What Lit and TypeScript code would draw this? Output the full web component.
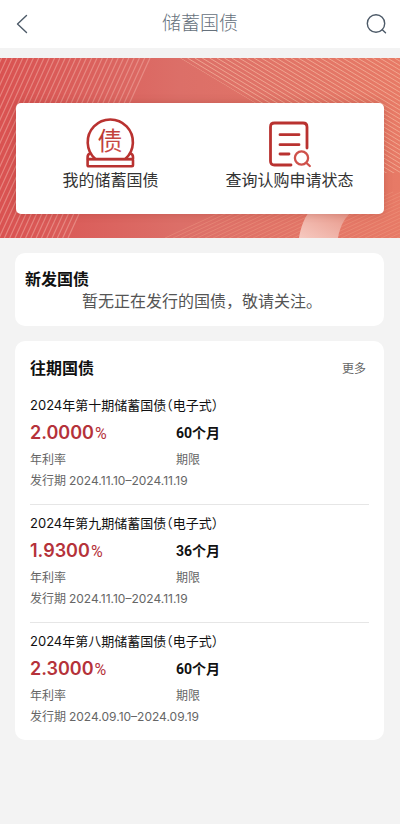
import { LitElement, html, css, svg } from "lit";
import { customElement } from "lit/decorators.js";

interface Bond {
  title: string;
  rate: string;
  term: string;
  period: string;
}

const BONDS: Bond[] = [
  { title: "2024年第十期储蓄国债（电子式）", rate: "2.0000", term: "60个月", period: "2024.11.10–2024.11.19" },
  { title: "2024年第九期储蓄国债（电子式）", rate: "1.9300", term: "36个月", period: "2024.11.10–2024.11.19" },
  { title: "2024年第八期储蓄国债（电子式）", rate: "2.3000", term: "60个月", period: "2024.09.10–2024.09.19" },
];

const backIcon = html`<svg width="24" height="24" viewBox="0 0 24 24" fill="none" stroke="#4d5a68" stroke-width="1.4" stroke-linecap="round" stroke-linejoin="round"><path d="M15.500 3.500 6.500 12l9 8.500"/></svg>`;

const searchIcon = html`<svg width="24" height="24" viewBox="0 0 24 24" fill="none" stroke="#4d5a68" stroke-width="1.4" stroke-linecap="round"><circle cx="11" cy="11.500" r="8.700"/><path d="m17.300 17.800 3.200 3"/></svg>`;

const bondIcon = html`<svg width="50" height="50" viewBox="0 0 50 50" fill="none" stroke="#b93230" stroke-width="2.6" stroke-linejoin="round">
  <defs><linearGradient id="ink" x1="0" y1="0" x2="1" y2="1"><stop offset="0" stop-color="#b22e2d"/><stop offset="1" stop-color="#d4574f"/></linearGradient></defs>
  <path d="M9.300 41A22.600 22.600 0 1 1 39.300 41"/>
  <path d="M4.500 35.500Q1.600 36 1.600 39V41H47V39Q47 36 44.100 35.500"/>
  <rect x="1.600" y="41.300" width="45.400" height="7" rx="1"/>
  <text class="seal" x="24" y="32" text-anchor="middle" fill="url(#ink)" stroke="none">债</text>
</svg>`;

const queryIcon = html`<svg width="50" height="50" viewBox="0 0 50 50" fill="none" stroke="#b93230" stroke-width="2.8" stroke-linecap="round">
  <path d="M26 47H9.500Q5.500 47 5.500 43V9Q5.500 5 9.500 5H38Q42 5 42 9V30"/>
  <path d="M15 16.700H34M15 26.700H34M15 36H24"/>
  <g stroke="#cf514b" stroke-width="2.3"><circle cx="36.500" cy="40" r="6.600"/><path d="m41.500 45 3.300 3"/></g>
</svg>`;

const leftLines = Array.from({ length: 44 }, (_, i) => {
  const x = 150 - i * 5.3;
  return svg`<path d="M${x} 0 ${x - 82} 180"/>`;
});

const rightLines = Array.from({ length: 56 }, (_, i) => {
  const x = 180 + (i - 24) * 7.4;
  return svg`<path d="M${x} 0l300 180"/>`;
});

const lowerLines = Array.from({ length: 40 }, (_, i) => {
  const x = 165 + i * 8;
  return svg`<path d="M${x} 180l100-46"/>`;
});

@customElement("app-root")
export class AppRoot extends LitElement {
  static styles = css`
    :host {
      display: block;
      min-height: 100vh;
      background: #f3f3f3;
      color: #111;
      font-family: Roboto, "Noto Sans CJK SC", sans-serif;
    }
    * { box-sizing: border-box; }
    h1, h2, h3, p, dl, dd, dt, ul { margin: 0; padding: 0; font-weight: 400; }
    button { border: 0; padding: 0; background: none; font: inherit; color: inherit; cursor: pointer; }
    svg { display: block; }
    .bar {
      display: flex;
      align-items: center;
      justify-content: space-between;
      height: 48px;
      padding: 0 11px;
      background: #fff;
    }
    .bar h1 { font-size: 19px; line-height: 28px; font-weight: 300; color: #66717c; }
    .banner {
      position: relative;
      margin-top: 10px;
      padding: 45px 16px 24px;
      background: linear-gradient(90deg, #d95251, #dc6f68 45%, #e77a66);
    }
    .art { position: absolute; inset: 0; width: 100%; height: 100%; }
    .actions {
      position: relative;
      display: grid;
      grid-template-columns: 1fr 1fr;
      padding: 15px 5px 21px;
      border-radius: 5px;
      background: #fff;
      box-shadow: 0 0 8px rgba(140, 50, 40, 0.3);
    }
    .action {
      display: flex;
      flex-direction: column;
      align-items: center;
      font-size: 16px;
      line-height: 25px;
      color: #333;
    }
    .seal { font-size: 25px; font-family: "Noto Sans CJK SC", sans-serif; }
    .card { margin: 15px 16px 0 15px; border-radius: 10px; background: #fff; }
    .fresh { padding: 16px 5px 13px 10px; }
    .card h2 { font-size: 16px; line-height: 22px; font-weight: 700; }
    .empty { font-size: 16px; line-height: 22px; text-align: center; color: #555; }
    .past { padding: 10px 15px 0; }
    .head { display: flex; align-items: center; justify-content: space-between; height: 36px; }
    .more { padding-right: 3px; font-size: 12px; line-height: 16px; color: #666; text-decoration: none; }
    .list { list-style: none; }
    .item { padding: 8px 0 11px; border-bottom: 1px solid #e6e6e6; }
    .item:last-child { border-bottom: 0; }
    .item h3 {
      font-family: Inter, "Noto Sans CJK SC", sans-serif;
      font-size: 13px;
      line-height: 20px;
      font-feature-settings: "halt";
    }
    .facts { display: grid; grid-template-columns: 146px 1fr; }
    .fact { display: flex; flex-direction: column-reverse; }
    .fact dt, .issue { font-size: 12px; line-height: 18px; color: #666; }
    .fact dd { height: 36px; font-size: 14px; line-height: 36px; font-weight: 700; }
    .fact .rate {
      display: flex;
      align-items: baseline;
      gap: 1px;
      font-family: Inter, sans-serif;
      font-size: 18px;
      font-weight: 600;
      color: #b5323a;
    }
    .percent { font-family: Roboto, sans-serif; font-size: 16px; font-weight: 400; }
    .item .issue { line-height: 24px; }
    .dates { font-family: Inter, sans-serif; font-size: 12px; }
  `;

  render() {
    return html`
      <header class="bar">
        <button aria-label="返回">${backIcon}</button>
        <h1>储蓄国债</h1>
        <button aria-label="搜索">${searchIcon}</button>
      </header>
      <main>
        <section class="banner">
          <svg class="art" viewBox="0 0 400 180" preserveAspectRatio="xMidYMid slice" fill="none" aria-hidden="true">
            <defs>
              <clipPath id="upper"><path d="M180 0H400V115L372 115Z"/></clipPath>
              <linearGradient id="glow" x1="0" y1="1" x2="1" y2="0"><stop offset="0" stop-color="#f6c9c0"/><stop offset="1" stop-color="#e58f80"/></linearGradient>
            </defs>
            <g stroke="#f0a59c" stroke-opacity="0.6" stroke-width="1.2">${leftLines}</g>
            <g stroke="#f8bfa6" stroke-opacity="0.65" clip-path="url(#upper)">${rightLines}</g>
            <g stroke="#f3a78c" stroke-opacity="0.35">${lowerLines}</g>
            <path fill="url(#glow)" d="M299 180C301 168 305 158 312 150H356C345 158 340 168 338 180Z"/>
          </svg>
          <div class="actions">
            <button class="action">${bondIcon}<span>我的储蓄国债</span></button>
            <button class="action">${queryIcon}<span>查询认购申请状态</span></button>
          </div>
        </section>
        <section class="card fresh">
          <h2>新发国债</h2>
          <p class="empty">暂无正在发行的国债，敬请关注。</p>
        </section>
        <section class="card past">
          <div class="head"><h2>往期国债</h2><a class="more" href="#more">更多</a></div>
          <ul class="list">
            ${BONDS.map(
              (b) => html`<li class="item">
                <h3>${b.title}</h3>
                <dl class="facts">
                  <div class="fact"><dt>年利率</dt><dd class="rate">${b.rate}<span class="percent">%</span></dd></div>
                  <div class="fact"><dt>期限</dt><dd>${b.term}</dd></div>
                </dl>
                <p class="issue">发行期 <span class="dates">${b.period}</span></p>
              </li>`
            )}
          </ul>
        </section>
      </main>
    `;
  }
}
